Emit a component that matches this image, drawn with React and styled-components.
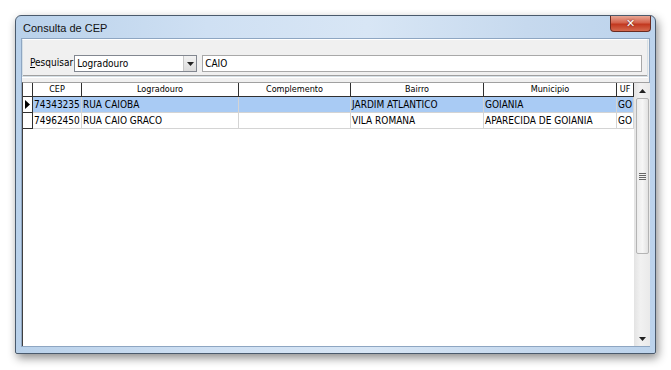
import React from 'react'
import styled, { createGlobalStyle } from 'styled-components'

const GlobalStyle = createGlobalStyle`
  html, body {
    margin: 0;
    padding: 0;
    background: #ffffff;
    font-family: "DejaVu Sans Condensed", "Liberation Sans", sans-serif;
  }
`

const rows = [
  { cep: '74343235', logradouro: 'RUA CAIOBA', complemento: '', bairro: 'JARDIM ATLANTICO', municipio: 'GOIANIA', uf: 'GO' },
  { cep: '74962450', logradouro: 'RUA CAIO GRACO', complemento: '', bairro: 'VILA ROMANA', municipio: 'APARECIDA DE GOIANIA', uf: 'GO' },
]

const columns = ['CEP', 'Logradouro', 'Complemento', 'Bairro', 'Municipio', 'UF']
const cols = '10px 49px 157px 112px 133px 133px 17px'

const Page = styled.div`
  padding: 15px 0 0 15px;
  width: 671px;
  height: 370px;
  box-sizing: border-box;
`

const Window = styled.div`
  width: 641px;
  height: 339px;
  box-sizing: border-box;
  border: 1px solid #4a5a6c;
  border-radius: 6px 6px 2px 2px;
  background: linear-gradient(90deg, #b9d1ea 0%, #cfe0f3 30%, #d8e6f5 55%, #c6d9ee 80%, #bcd3ec 100%);
  box-shadow: 2px 4px 10px rgba(0, 0, 0, 0.45);
  display: flex;
  flex-direction: column;
  padding: 0 5px 6px 5px;
`

const TitleBar = styled.div`
  height: 22px;
  display: flex;
  align-items: flex-start;
`

const Title = styled.span`
  font-family: "Liberation Sans", sans-serif;
  font-size: 11px;
  color: #111;
  margin-top: 6px;
  margin-left: 2px;
`

const CloseButton = styled.div`
  margin-left: auto;
  margin-right: -1px;
  width: 39px;
  height: 15px;
  border: 1px solid #6b2b20;
  border-top: none;
  border-radius: 0 0 4px 4px;
  background: linear-gradient(180deg, #e8a593 0%, #d4624c 45%, #c2381f 55%, #d56a4f 100%);
  display: flex;
  align-items: center;
  justify-content: center;
  color: #fff;
  font-family: "DejaVu Sans", sans-serif;
  font-weight: bold;
  font-size: 11px;
  text-shadow: 0 0 2px #5a1a10;
`

const Client = styled.div`
  flex: 1;
  background: #f0f0f0;
  border: 1px solid #8ea6c2;
  display: flex;
  flex-direction: column;
  min-height: 0;
`

const SearchBox = styled.div`
  margin: 0 1px 0 0;
  height: 38px;
  box-sizing: border-box;
  border: 1px solid #d5dfe5;
  border-top-color: #ffffff;
  box-shadow: inset 0 -1px 0 #a0a0a0, 0 1px 0 #fff;
  display: flex;
  align-items: flex-start;
  padding: 15px 5px 0 7px;
  gap: 1px;
`

const Label = styled.span`
  font-size: 10px;
  line-height: 16px;
  color: #000;
  u { text-decoration: underline; }
`

const Combo = styled.div`
  width: 123px;
  height: 17px;
  box-sizing: border-box;
  border: 1px solid #828790;
  background: #fff;
  display: flex;
  align-items: center;
  font-size: 10px;
  padding-left: 2px;
`

const ComboText = styled.span`
  flex: 1;
`

const ComboArrow = styled.div`
  width: 12px;
  height: 100%;
  display: flex;
  align-items: center;
  justify-content: center;
  background: linear-gradient(180deg, #f2f2f2, #dcdcdc);
  border-left: 1px solid #c8c8c8;
`

const Edit = styled.div`
  flex: 1;
  height: 17px;
  box-sizing: border-box;
  border: 1px solid #a8a8a8;
  background: #fff;
  font-size: 10px;
  display: flex;
  align-items: center;
  padding-left: 2px;
  margin-left: 4px;
`

const Grid = styled.div`
  flex: 1;
  margin-top: 5px;
  background: #fff;
  border-top: 1px solid #a0a0a0;
  border-left: 1px solid #404040;
  display: flex;
  min-height: 0;
`

const Table = styled.div`
  flex: 1;
  display: flex;
  flex-direction: column;
`

const Row = styled.div`
  display: grid;
  grid-template-columns: ${cols};
  height: ${p => (p.$header ? 14 : 16)}px;
  background: ${p => (p.$selected ? '#a9cbf4' : '#fff')};
`

const HeadCell = styled.div`
  font-size: 9px;
  color: #000;
  text-align: center;
  line-height: 13px;
  border-right: 1px solid #303030;
  border-bottom: 1px solid #303030;
  white-space: nowrap;
  overflow: hidden;
  background: #fff;
`

const Cell = styled.div`
  font-size: 10px;
  color: #000;
  line-height: 15px;
  padding-left: 1px;
  border-right: 1px solid ${p => (p.$dark ? '#303030' : '#d4d4d4')};
  border-bottom: 1px solid ${p => (p.$dark ? '#303030' : '#d4d4d4')};
  white-space: nowrap;
  overflow: hidden;
  background: ${p => (p.$indicator ? '#fff' : 'transparent')};
  display: flex;
  align-items: center;
`

const Scrollbar = styled.div`
  width: 16px;
  background: linear-gradient(90deg, #e3e3e3, #f1f1f1 40%, #eaeaea);
  display: flex;
  flex-direction: column;
  align-items: center;
`

const ArrowBtn = styled.div`
  width: 16px;
  height: 15px;
  display: flex;
  align-items: center;
  justify-content: center;
  margin-top: ${p => (p.$down ? 'auto' : '0')};
`

const Thumb = styled.div`
  width: 13px;
  height: 156px;
  box-sizing: border-box;
  border: 1px solid #b4b4b4;
  border-radius: 2px;
  background: linear-gradient(90deg, #ececec, #f6f6f6 50%, #e2e2e2);
  display: flex;
  align-items: center;
  justify-content: center;
`

const Arrow = ({ up }) => (
  <svg width="7" height="4" viewBox="0 0 7 4">
    <path d={up ? 'M0 4 L3.5 0 L7 4 Z' : 'M0 0 L3.5 4 L7 0 Z'} fill="#222" />
  </svg>
)

const Grip = () => (
  <svg width="7" height="7" viewBox="0 0 7 7">
    {[0, 2, 4, 6].map(y => (
      <rect key={y} x="0" y={y} width="7" height="1" fill="#666" />
    ))}
  </svg>
)

export default function App() {
  return (
    <Page>
      <GlobalStyle />
      <Window>
        <TitleBar>
          <Title>Consulta de CEP</Title>
          <CloseButton>✕</CloseButton>
        </TitleBar>
        <Client>
          <SearchBox>
            <Label><u>P</u>esquisar</Label>
            <Combo>
              <ComboText>Logradouro</ComboText>
              <ComboArrow><Arrow /></ComboArrow>
            </Combo>
            <Edit>CAIO</Edit>
          </SearchBox>
          <Grid>
            <Table>
              <Row $header>
                <HeadCell />
                {columns.map(c => <HeadCell key={c}>{c}</HeadCell>)}
              </Row>
              {rows.map((r, i) => (
                <Row key={r.cep} $selected={i === 0}>
                  <Cell $dark $indicator>
                    {i === 0 && (
                      <svg width="6" height="9" viewBox="0 0 6 9">
                        <path d="M1 0 L6 4.5 L1 9 Z" fill="#000" />
                      </svg>
                    )}
                  </Cell>
                  <Cell>{r.cep}</Cell>
                  <Cell>{r.logradouro}</Cell>
                  <Cell>{r.complemento}</Cell>
                  <Cell>{r.bairro}</Cell>
                  <Cell>{r.municipio}</Cell>
                  <Cell>{r.uf}</Cell>
                </Row>
              ))}
            </Table>
            <Scrollbar>
              <ArrowBtn><Arrow up /></ArrowBtn>
              <Thumb><Grip /></Thumb>
              <ArrowBtn $down><Arrow /></ArrowBtn>
            </Scrollbar>
          </Grid>
        </Client>
      </Window>
    </Page>
  )
}
